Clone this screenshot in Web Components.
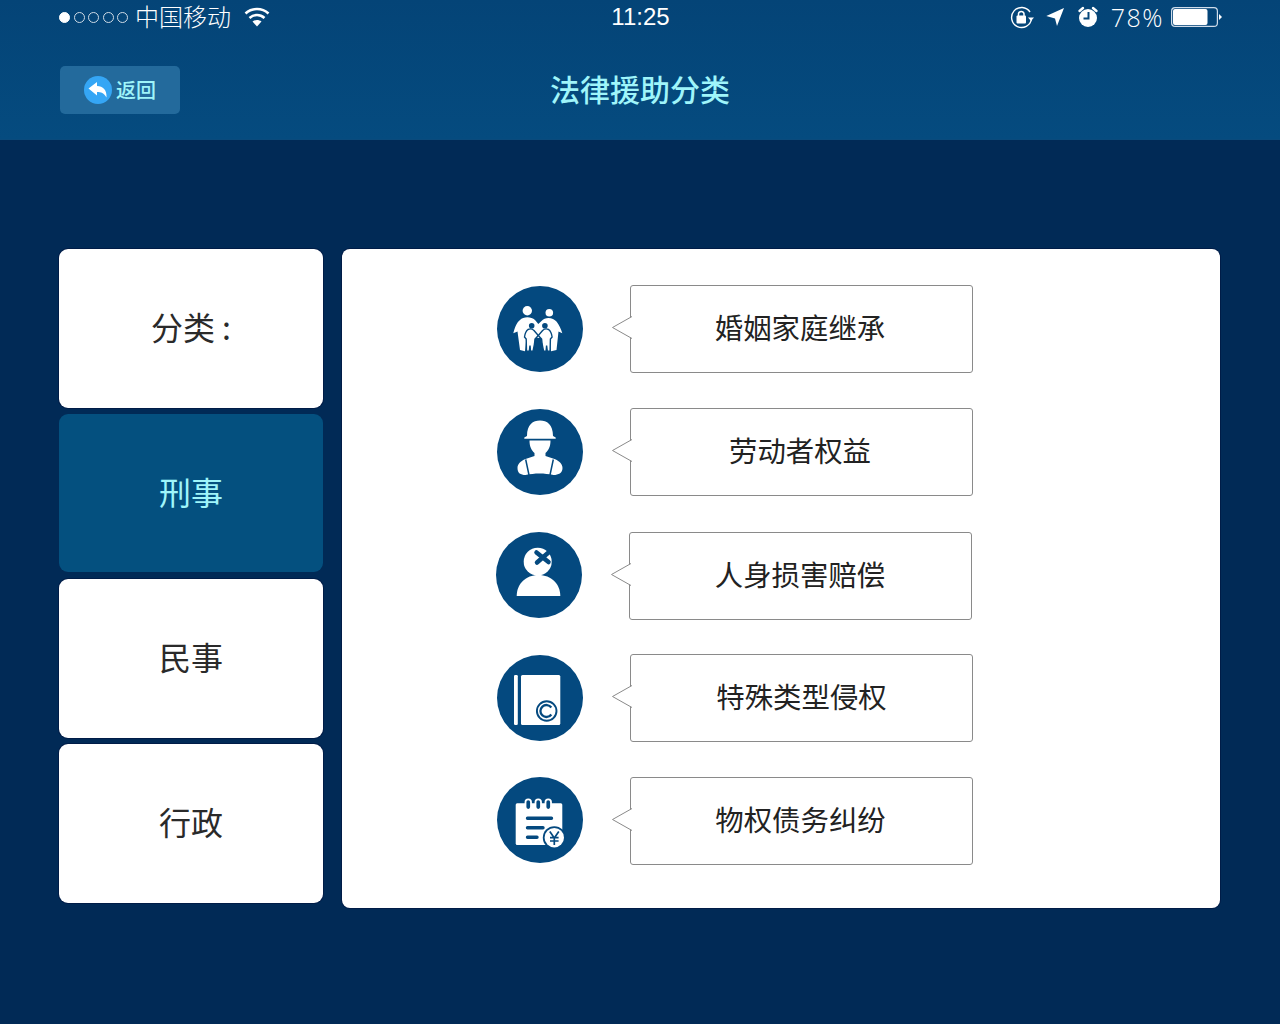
<!DOCTYPE html>
<html lang="zh-CN"><head><meta charset="utf-8"><title>法律援助分类</title>
<style>
html,body{margin:0;padding:0;background:#012a56;}
body{width:1280px;height:1024px;overflow:hidden;font-family:"Noto Sans CJK SC","Noto Sans",sans-serif;}
</style></head><body>
<legal-app></legal-app>
<script>
const FONT='"Noto Sans CJK SC","Noto Sans",sans-serif';
function def(name,html){
  customElements.define(name,class extends HTMLElement{
    constructor(){super();this.attachShadow({mode:'open'}).innerHTML=typeof html==='function'?html(this):html;}
  });
}
const CHILD=`M31 43.5C33 42.5 35.500 43 37 44.500L41.300 49.500L38 53L37.500 58L36 65.300H33.500L33 59.500L32.300 65.300H29.500L29.200 53L27.500 51C28 47 29 45 31 43.500Z`;
const ICONS={
family:`<circle cx="30.3" cy="24.7" r="4.7" fill="#fff"/><circle cx="52.3" cy="26.7" r="3.8" fill="#fff"/>
<path fill="#fff" d="M16.300 47.300C18 41 20 36 23 34C26 30.500 34 30 38 34L41.300 38L44.500 35C48 30.500 56 31 59.700 35.700C62 38.500 64 43 65.300 47.300L61.500 45.500L59.500 64L54 65.300L53 56L47 50L41.300 52L36 50L29 56L28 65.300L23 64L20.500 45.500Z"/>
<path fill="#fff" stroke="#04497f" stroke-width="1.400" d="${CHILD}"/>
<path fill="#fff" stroke="#04497f" stroke-width="1.400" transform="translate(82.600 0) scale(-1 1)" d="${CHILD}"/>
<circle cx="34.700" cy="39.700" r="2.800" fill="#04497f"/><circle cx="47.900" cy="39.700" r="2.800" fill="#04497f"/>`,
worker:`<path fill="#fff" d="M30 27C30 15.500 36 11.500 43 11.500S56 15.500 56 27l2.700 1.500v1.200H27.300v-1.200z"/>
<path fill="#fff" d="M32.500 31.500h21c0 6-2 10-5 12.500v3l9 3c5 2 8 5 8 9 0 5-4 7-9 7-5-1-9-1.500-14-1.500s-9 .5-14 1.500c-5 0-8-2-8-7 0-4 3-7 8-9l9-3v-3c-3-2.500-5-6.500-5-12.500z"/>
<path stroke="#04497f" stroke-width="1.500" fill="none" d="M28.700 50.500l3.300 15.500M56.300 50.500L53 66"/>`,
injury:`<circle cx="41.700" cy="29.700" r="14" fill="#fff"/><path fill="#fff" d="M20.700 64c0-12 9-21 21.800-21s21.800 9 21.800 21z"/>
<path stroke="#04497f" stroke-width="4.500" stroke-linecap="round" fill="none" d="M40.500 20.500l12 9.500M52.500 20.500L41 30.500"/>`,
book:`<rect x="17" y="20" width="3.800" height="50" rx="1.200" fill="#fff"/><rect x="24" y="20" width="39.300" height="50" rx="1.500" fill="#fff"/>
<circle cx="49.700" cy="56" r="9.800" fill="none" stroke="#04497f" stroke-width="1.900"/><path d="M54.300 52.500a6 6 0 1 0 0 7" fill="none" stroke="#04497f" stroke-width="2.300"/>`,
ledger:`<path fill="#fff" d="M20.200 26.300h43.600a1.500 1.500 0 0 1 1.500 1.500V68H20.200a1.500 1.500 0 0 1-1.500-1.500V27.800a1.500 1.500 0 0 1 1.500-1.500z"/>
<g fill="#04497f" stroke="#fff" stroke-width="1.800"><rect x="28.500" y="22.300" width="5.500" height="10.500" rx="2.700"/><rect x="38.500" y="22.300" width="5.500" height="10.500" rx="2.700"/><rect x="48.500" y="22.300" width="5.500" height="10.500" rx="2.700"/></g>
<path stroke="#04497f" stroke-width="3.400" stroke-linecap="round" fill="none" d="M30.500 41.300h24M30.500 50.700h15.500M30.500 60.300h9.500"/>
<circle cx="57.300" cy="60.700" r="11.500" fill="#04497f"/><circle cx="57.300" cy="60.700" r="9.700" fill="#fff"/>
<path stroke="#04497f" stroke-width="1.700" fill="none" d="M52.800 54.500l4.500 6.500 4.500-6.500M57.300 61v7M53 60.700h8.600M53 64h8.600"/>`
};
def('law-icon',h=>`<style>:host{display:block;width:86px;height:86px;flex:none}svg{display:block}</style>
<svg width="86" height="86" viewBox="0 0 86 86"><circle cx="43" cy="43" r="43" fill="#04497f"/>${ICONS[h.getAttribute('name')]}</svg>`);
def('speech-box',`<style>
:host{display:flex;position:relative;align-items:center;justify-content:center;box-sizing:border-box;width:343px;height:88px;background:#fff;border:1px solid #8a8a8a;border-radius:3px;
font:400 28.400px/1 ${FONT};color:#222;padding:0 var(--text-pad,3px) 3px 0}
svg{position:absolute;left:-20px;top:30px}
</style><svg width="21" height="24" viewBox="0 0 21 24"><path d="M21 .5 1.500 11.500 21 22.500" fill="#fff" stroke="#8a8a8a"/></svg><slot></slot>`);
def('law-row',h=>`<style>
:host{display:flex;align-items:center;gap:47px}
:host([snug]){align-items:flex-start}
</style><law-icon name="${h.getAttribute('icon')}"></law-icon><speech-box><slot></slot></speech-box>`);
def('side-card',`<style>
:host{display:flex;align-items:center;justify-content:center;box-sizing:border-box;padding-bottom:6px;background:#fff;border-radius:9px;box-shadow:0 0 0 1px #001c47;color:#2a2a2a;font:400 32px/1 ${FONT}}
:host([active]){background:#04507f;color:#9ff5fa;box-shadow:none;height:158px;padding-bottom:4px}
</style><slot></slot>`);
def('status-bar',`<style>
:host{display:block;height:34px;position:relative;color:#fff;font:300 24px/1 ${FONT}}
.row{display:flex;align-items:center;height:34px;padding:0 58px 0 59px;position:relative}
.dots{display:flex;align-items:center;gap:3.500px;margin-right:7px}
.dots i{display:block;box-sizing:border-box;width:11px;height:11px;border:1px solid #cfdbe6;border-radius:50%}
.dots i:first-child{background:#fff;border-color:#fff}
.label{padding-bottom:2px}
.wifi{margin-left:13px}
.time{position:absolute;left:1px;right:0;top:5px;text-align:center;font:400 24px/24px "Liberation Sans",sans-serif;color:#fff}
.right{margin-left:auto;display:flex;align-items:center}
.pct{font:300 25px/34px "Open Sans","Liberation Sans",sans-serif;letter-spacing:1.500px}
svg{display:block}
</style><div class="row"><span class="dots"><i></i><i></i><i></i><i></i><i></i></span><span class="label">中国移动</span>
<svg class="wifi" width="26" height="22" viewBox="0 0 26 22"><path fill="none" stroke="#fff" stroke-width="2.600" d="M1.500 7.500c6.500-6 16.500-6 23 0M5.500 12c4.500-4 10.500-4 15 0"/><path fill="#fff" d="M13 20.500 8.500 15.500c2.700-2 6.300-2 9 0z"/></svg>
<div class="right">
<svg width="26" height="24" viewBox="0 0 26 24" style="margin-right:11px"><path fill="none" stroke="#fff" stroke-width="1.400" d="M22.500 14A10 10 0 1 1 21 7"/><path fill="#fff" d="M19 12.500h6l-3 3.500z"/><rect x="7.500" y="10.500" width="9.500" height="8" rx="1" fill="#fff"/><path fill="none" stroke="#fff" stroke-width="1.500" d="M9.500 11V8.700a2.800 2.800 0 0 1 5.500 0V11"/></svg>
<svg width="18" height="19" viewBox="0 0 18 19" style="margin-right:13px"><path fill="#fff" d="M.300 8 18 0l-7 18-2-7.500z"/></svg>
<svg width="22" height="22" viewBox="0 0 22 22" style="margin-right:12px"><circle cx="11" cy="12" r="9" fill="#fff"/><path stroke="#04477b" stroke-width="2" fill="none" d="M11.500 6v6.500H6.500"/><path stroke="#fff" stroke-width="2.400" stroke-linecap="round" d="M2.500 5 6 2M19.500 5 16 2"/></svg>
<span class="pct">78%</span>
<svg width="51" height="20" viewBox="0 0 51 20" style="margin-left:7px"><rect x=".6" y=".6" width="45.800" height="18.800" rx="3.500" fill="none" stroke="#cfdcea" stroke-width="1.200"/><rect x="2" y="2" width="34.500" height="16" rx="2" fill="#fff"/><path fill="#fff" d="M48 7l3 3-3 3z"/></svg>
</div></div>
<div class="time">11:25</div>`);
def('back-button',`<style>
:host{display:flex;align-items:center;box-sizing:border-box;width:120px;height:48px;background:#236a9c;border-radius:5px;padding-left:24px;gap:4px;color:#9ff5fa;font:500 20px/1 ${FONT}}
svg{display:block;flex:none}
</style><svg width="28" height="28" viewBox="0 0 28 28"><circle cx="14" cy="14" r="14" fill="#35a6f5"/><path fill="#fff" d="M4.500 12.500 13 6v4c6 0 10 4 9.500 11.500-2.500-4.500-5.500-5.500-9.500-5.500v3.500z"/></svg><slot></slot>`);
def('nav-bar',`<style>
:host{display:block;height:139px;background:linear-gradient(#044477,#054b7f);border-bottom:1px solid #0a4a7c}
.bar{display:flex;align-items:center;position:relative;padding:32px 0 0 60px;height:48px}
.title{position:absolute;left:0;right:0;top:30px;text-align:center;color:#9ff5fa;font:500 30px/48px ${FONT}}
</style><status-bar></status-bar><div class="bar"><back-button>返回</back-button><div class="title">法律援助分类</div></div>`);
def('legal-app',`<style>
:host{display:block;width:1280px;height:1024px;background:#012a56}
main{display:flex;gap:19px;padding:109px 0 0 59px}
.side{display:grid;grid-template-rows:repeat(4,159px);gap:6px;width:264px;align-self:flex-start}
.panel{box-sizing:border-box;width:878px;height:659px;background:#fff;border-radius:8px;box-shadow:0 0 0 1px #001c47;padding:36px 0 0 155px;display:flex;flex-direction:column}
.colon{margin-left:7px}
law-row:nth-child(2){margin-top:35px}
law-row:nth-child(3){margin-top:36px;margin-left:-1px;--text-pad:1px}
law-row:nth-child(4){margin-top:34px;--text-pad:0px}
law-row:nth-child(5){margin-top:35px;--text-pad:2px}
</style>
<nav-bar></nav-bar>
<main>
<div class="side"><side-card>分类<span class="colon">:</span></side-card><side-card active>刑事</side-card><side-card>民事</side-card><side-card>行政</side-card></div>
<div class="panel">
<law-row icon="family">婚姻家庭继承</law-row>
<law-row icon="worker">劳动者权益</law-row>
<law-row icon="injury" snug>人身损害赔偿</law-row>
<law-row icon="book">特殊类型侵权</law-row>
<law-row icon="ledger" snug>物权债务纠纷</law-row>
</div></main>`);
</script>
</body></html>
